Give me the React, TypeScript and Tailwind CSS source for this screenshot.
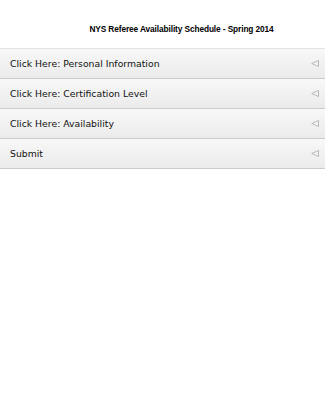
const items = [
  'Click Here: Personal Information',
  'Click Here: Certification Level',
  'Click Here: Availability',
  'Submit',
];

function LeftArrow() {
  return (
    <svg width="8" height="7" viewBox="0 0 8 7" className="shrink-0">
      <path d="M7.5 0.5 L0.7 3.5 L7.5 6.5 Z" fill="#f4f4f4" stroke="#b8b8b8" strokeWidth="1" strokeLinejoin="round" />
    </svg>
  );
}

export default function App() {
  return (
    <div className="w-[325px] h-[400px] bg-white">
      <div className="h-[48px] pt-[24px] text-center">
        <h1 className="pl-[38px] text-[8.3px] leading-[10px] font-bold tracking-[-0.1px] text-black font-['Liberation_Sans',Arial,sans-serif]">
          NYS Referee Availability Schedule - Spring 2014
        </h1>
      </div>
      <ul className="border-t border-[#e2e2e2] font-['DejaVu_Sans',Verdana,sans-serif]">
        {items.map((label) => (
          <li
            key={label}
            className="flex h-[30px] items-center justify-between border-b border-[#cccccc] bg-gradient-to-b from-[#f8f8f8] to-[#ebebeb] pl-[10px] pr-[6px] text-[9.3px] text-[#111]"
          >
            <span>{label}</span>
            <LeftArrow />
          </li>
        ))}
      </ul>
    </div>
  );
}
